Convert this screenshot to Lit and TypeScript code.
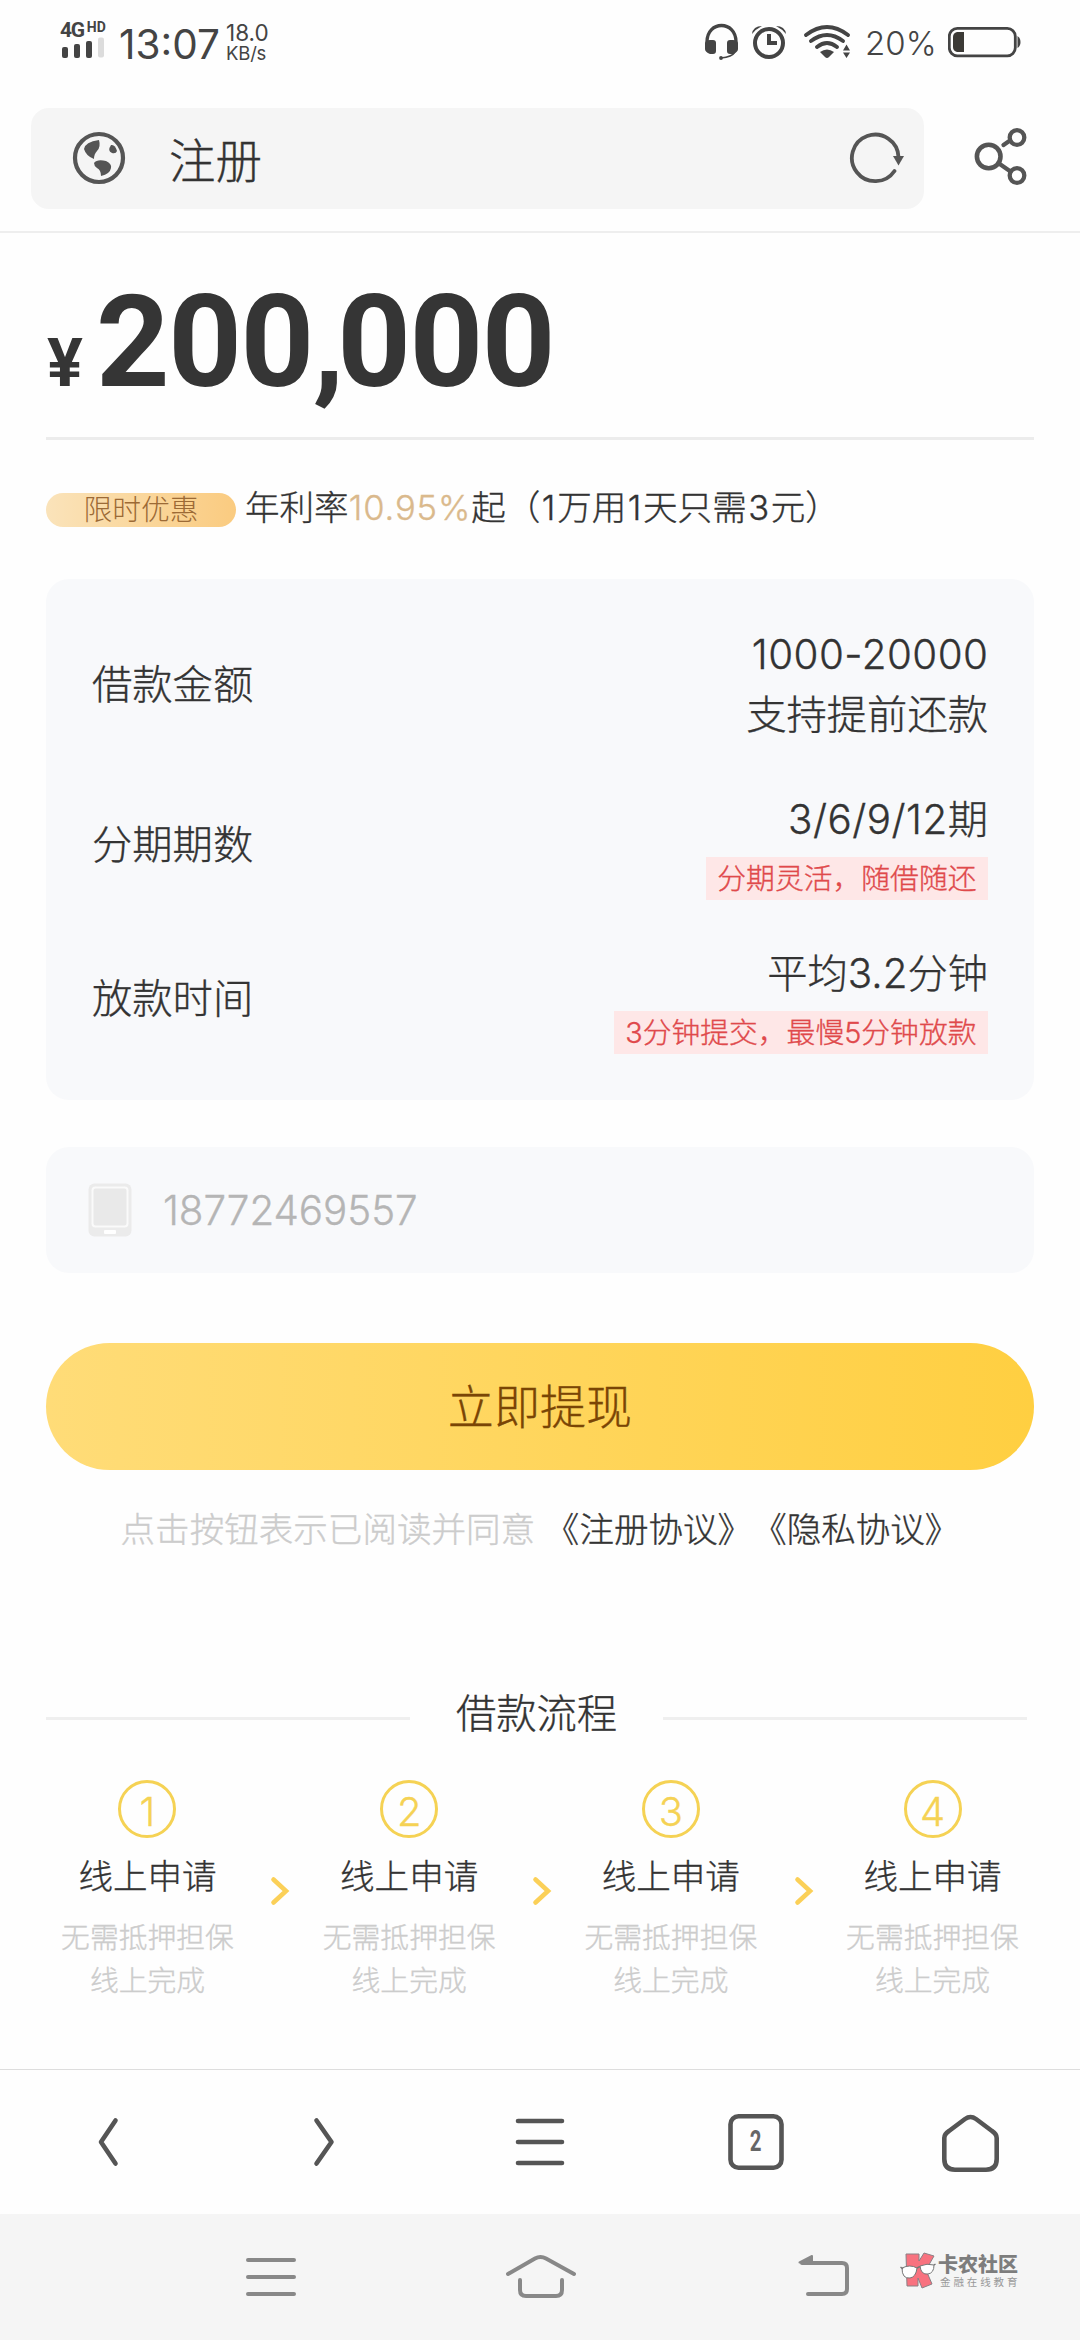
import { LitElement, html, css, svg } from "lit";
import { customElement, property } from "lit/decorators.js";

const fontStack = css`"Inter", "Noto Sans CJK SC", sans-serif`;

@customElement("status-bar")
class StatusBar extends LitElement {
  static styles = css`
    :host { display: flex; justify-content: space-between; height: 108px; padding: 0 59px 0 60px; box-sizing: border-box; color: #444; font-family: ${fontStack}; -webkit-text-stroke: 0; }
    .side { display: flex; }
    .signal { width: 47px; padding-top: 22px; }
    .net { display: flex; align-items: flex-start; gap: 3px; height: 15px; font-family: Roboto, sans-serif; font-weight: 700; }
    .gen { font-size: 21px; line-height: 16px; letter-spacing: -1.3px; }
    .hd { font-size: 14px; line-height: 11px; }
    .bars { display: block; width: 44px; height: 21px; }
    .clock { margin-left: 12px; padding-top: 24px; font-size: 40.500px; line-height: 42px; letter-spacing: 0; width: 103px; white-space: nowrap; font-weight: 400; }
    .speed { padding-top: 21px; margin-left: 4px; font-weight: 400; }
    .rate { font-size: 22.500px; line-height: 23px; }
    .unit { font-size: 18.500px; line-height: 18px; letter-spacing: -0.200px; }
    .icon { display: block; height: 40px; margin-top: 22px; }
    .pct { font-size: 33px; line-height: 42px; padding-top: 22px; margin-left: 13px; width: 83px; letter-spacing: 0; font-weight: 350; }
  `;
  render() {
    return html`
      <div class="side">
        <div class="signal">
          <div class="net"><span class="gen">4G</span><span class="hd">HD</span></div>
          <svg class="bars" viewBox="60 37 44 21">
            <rect x="62" y="47" width="6" height="11" rx="2" fill="#444" />
            <rect x="74" y="44" width="6" height="14" rx="2" fill="#444" />
            <rect x="86" y="41" width="6" height="17" rx="2" fill="#444" />
            <rect x="98" y="37.500" width="6" height="20" rx="2" fill="#dcdcdc" />
          </svg>
        </div>
        <div class="clock">13:07</div>
        <div class="speed"><div class="rate">18.0</div><div class="unit">KB/s</div></div>
      </div>
      <div class="side">
        <svg class="icon" width="148" viewBox="704 22 148 40" fill="none" stroke="#444">
          <path d="M707 45V42C707 20 736 20 736 42V45" stroke-width="3.400" />
          <path d="M705 43Q706 40 710 40H713Q716 40 716 43V51Q716 54 713 54H710Q705 52 705 49Z" fill="#444" stroke="none" />
          <path d="M738 43Q737 40 733 40H730Q727 40 727 43V51Q727 54 730 54H733Q738 52 738 49Z" fill="#444" stroke="none" />
          <path d="M735 52Q732 57 721 58" stroke-width="1.500" />
          <circle cx="721" cy="58" r="1.900" fill="#444" stroke="none" />
          <circle cx="769" cy="43" r="14" stroke-width="4" />
          <path d="M769 34V43H777" stroke-width="4" />
          <path d="M752 34Q753 26 762 26Q756 29 752 34ZM786 34Q785 26 776 26Q782 29 786 34Z" fill="#444" stroke="none" />
          <path d="M806 35Q827 19 848 35M811 41Q827 29 843 41M817 47Q827 39 837 47" stroke-width="3.800" stroke-linecap="round" />
          <path d="M820 52Q827 47 834 52L829 57Q827 59 825 57Z" fill="#444" stroke="none" />
          <path d="M843 50.500L846.500 44.500L850 50.500ZM843 52.500H850L846.500 58Z" fill="#444" stroke="none" />
        </svg>
        <div class="pct">20%</div>
        <svg class="icon" width="73" viewBox="948 22 73 40">
          <rect x="949.300" y="28.300" width="66" height="27.500" rx="8" fill="none" stroke="#444" stroke-width="2.800" />
          <path d="M964 32H957Q953 33 953 37V47Q953 51 957 52H964Z" fill="#3c3a36" />
          <path d="M1017.500 36Q1020.500 38 1020.500 42Q1020.500 46 1017.500 48Z" fill="#444" />
        </svg>
      </div>
    `;
  }
}

@customElement("address-bar")
class AddressBar extends LitElement {
  @property() title = "";
  static styles = css`
    :host { display: flex; height: 125px; box-sizing: border-box; padding-left: 31px; border-bottom: 2px solid #eee; font-family: ${fontStack}; }
    .field { display: flex; align-items: center; width: 893px; height: 101px; border-radius: 18px; background: #f5f5f5; }
    .globe { display: block; margin: 0 0 2px 41px; }
    .name { flex: 1; margin-left: 43px; padding-top: 4px; font-size: 46.500px; line-height: 60px; color: #333; }
    .reload { display: block; margin: 0 19px 2px 0; }
    .share { display: block; margin: 20px 0 0 49px; }
  `;
  render() {
    return html`
      <div class="field">
        <svg class="globe" width="54" height="54" viewBox="72 131 54 54">
          <circle cx="99" cy="158" r="24" fill="none" stroke="#555" stroke-width="4.200" />
          <path d="M84 149Q85 142 99 140Q101 147 97 151Q94 154 94 159Q86 156 84 149Z" fill="#555" />
          <path d="M94 163Q97 159 106 161Q112 164 111 168Q110 174 101 176Q101 170 97 168Q94 166 94 163Z" fill="#555" />
          <path d="M111 145Q115 144 117 151Q116 154 112 153Q107 151 111 145Z" fill="#555" />
        </svg>
        <span class="name">${this.title}</span>
        <svg class="reload" width="56" height="54" viewBox="849 131 56 54">
          <path d="M894.500 171A23.300 23.300 0 1 1 898.500 157" fill="none" stroke="#555" stroke-width="3.800" stroke-linecap="round" />
          <path d="M893 156H904L898.500 165.500Z" fill="#555" />
        </svg>
      </div>
      <svg class="share" width="56" height="58" viewBox="973 128 56 58" fill="none" stroke="#555">
        <circle cx="988.700" cy="156.500" r="11.800" stroke-width="4.600" />
        <circle cx="1017" cy="137.500" r="7.300" stroke-width="4.300" />
        <circle cx="1017" cy="175.500" r="7.300" stroke-width="4.300" />
        <path d="M1003.500 145L1010 140.500M999 163.500L1010.500 171.500" stroke-width="4.300" stroke-linecap="round" />
      </svg>
    `;
  }
}

interface Term { label: string; value: string; extra?: string; tag?: string; }
const terms: Term[] = [
  { label: "借款金额", value: "1000-20000", extra: "支持提前还款" },
  { label: "分期期数", value: "3/6/9/12期", tag: "分期灵活，随借随还" },
  { label: "放款时间", value: "平均3.2分钟", tag: "3分钟提交，最慢5分钟放款" },
];

@customElement("loan-terms")
class LoanTerms extends LitElement {
  static styles = css`
    :host { display: flex; flex-direction: column; gap: 44.500px; padding: 46px; border-radius: 23px; background: #f8f9fb; color: #333; font-size: 40.300px; line-height: 60px; }
    .row { display: flex; justify-content: space-between; align-items: center; }
    .values { display: flex; flex-direction: column; align-items: flex-end; }
    .amount { letter-spacing: 0.500px; margin-right: -0.500px; }
    .tag { margin-top: 7px; padding: 0 11.500px; font-size: 28.800px; line-height: 43px; background: #fee7e7; color: #e0494b; }
  `;
  render() {
    return html`${terms.map((t) => html`
      <div class="row">
        <span>${t.label}</span>
        <div class="values">
          <span class=${/^\d/.test(t.value) ? "amount" : "plain"}>${t.value}</span>
          ${t.extra ? html`<span>${t.extra}</span>` : ""}
          ${t.tag ? html`<span class="tag">${t.tag}</span>` : ""}
        </div>
      </div>`)}`;
  }
}

@customElement("loan-steps")
class LoanSteps extends LitElement {
  static styles = css`
    :host { display: flex; color: #333; }
    .step { display: flex; flex-direction: column; align-items: center; width: 203px; }
    .num { box-sizing: border-box; width: 58px; height: 58px; border: 3px solid #f5d254; border-radius: 50%; text-align: center; font-size: 40px; line-height: 57px; color: #f5d254; }
    .name { margin-top: 13px; font-size: 34.560px; line-height: 52px; }
    .desc { margin-top: 13px; font-size: 28.800px; line-height: 43.200px; color: #ccc; text-align: center; white-space: nowrap; }
    .arrow { display: flex; justify-content: center; box-sizing: border-box; width: 58.700px; padding: 96px 0 0 4px; }
  `;
  render() {
    return html`${[1, 2, 3, 4].map((n) => html`
      ${n > 1 ? html`<div class="arrow"><svg width="20" height="30" viewBox="0 0 20 30"><path d="M3.500 3.500L16 15L3.500 26.500" fill="none" stroke="#fbd058" stroke-width="4.600" stroke-linecap="round" /></svg></div>` : ""}
      <div class="step">
        <div class="num">${n}</div>
        <div class="name">线上申请</div>
        <div class="desc">无需抵押担保<br />线上完成</div>
      </div>`)}`;
  }
}

const toolIcons = [
  svg`<path d="M115.500 2120.500L101 2142L115.500 2163.500" />`,
  svg`<path d="M316.500 2120.500L331.500 2142L316.500 2163.500" />`,
  svg`<path d="M518 2121H562M518 2142H562M518 2163H562" />`,
  svg`<rect x="730.500" y="2116.300" width="51" height="51.500" rx="8" />`,
  svg`<path d="M965 2119Q970.500 2115 976 2119L992 2131Q996.700 2134 996.700 2138V2159Q996.700 2169.700 986 2169.700H955Q944.300 2169.700 944.300 2159V2138Q944.300 2134 949 2131Z" />`,
];

@customElement("browser-toolbar")
class BrowserToolbar extends LitElement {
  static styles = css`
    :host { display: grid; grid-template-columns: repeat(5, 216px); height: 145px; box-sizing: border-box; border-top: 1px solid #ddd; -webkit-text-stroke: 0; }
    .cell { display: grid; place-items: center; }
    .cell > * { grid-area: 1 / 1; }
    .icon { display: block; }
    .count { font-family: Roboto, sans-serif; font-weight: 700; font-size: 30px; line-height: 40px; color: #666; transform: scaleX(0.68); padding-bottom: 2px; }
  `;
  render() {
    return html`${toolIcons.map((icon, i) => html`
      <div class="cell">
        <svg class="icon" width="216" height="144" viewBox="${i * 216} 2070 216 144" fill="none" stroke="#555" stroke-width="4.600" stroke-linecap="round" stroke-linejoin="round">${icon}</svg>
        ${i === 3 ? html`<span class="count">2</span>` : ""}
      </div>`)}`;
  }
}

@customElement("system-nav")
class SystemNav extends LitElement {
  static styles = css`
    :host { display: flex; height: 126px; background: #f5f5f5; -webkit-text-stroke: 0; }
    .keys { display: block; }
    .brand { display: flex; align-items: flex-start; gap: 2px; padding: 38px 0 0 1px; }
    .words { display: flex; flex-direction: column; }
    .big { font-size: 20px; line-height: 24px; font-weight: 900; color: #7d7d7d; font-family: "Noto Sans CJK SC", sans-serif; white-space: nowrap; }
    .small { padding-left: 2px; font-size: 10.500px; line-height: 12px; letter-spacing: 2.900px; font-weight: 400; color: #999; font-family: "Noto Sans CJK SC", sans-serif; white-space: nowrap; }
  `;
  render() {
    return html`
      <svg class="keys" width="899" height="126" viewBox="0 2214 899 126" fill="none" stroke="#888" stroke-width="4" stroke-linecap="round" stroke-linejoin="round">
        <path d="M248 2260H294M248 2277H294M248 2294H294" />
        <path d="M508 2274L535 2258.500Q540.500 2255.500 546 2258.500L574 2274" />
        <path d="M520 2280V2290Q520 2296 526 2296H556Q562 2296 562 2290V2280" />
        <path d="M802 2263H842Q847 2263 847 2268V2289Q847 2294 842 2294H808" />
        <path d="M799.500 2262.500L812 2256V2263Z" fill="#888" stroke-width="2" />
      </svg>
      <div class="brand">
        <svg width="36" height="38" viewBox="899 2252 36 38">
          <path d="M905 2254H918V2261L923 2253L933 2256L925 2270L931 2284L921 2288L917 2278V2286H906Z" fill="#f8727f" stroke="#8a8085" />
          <path d="M901 2268Q901 2279 909 2278Q915 2277 916 2268Q909 2264 901 2268ZM919 2266Q920 2275 927 2274Q933 2273 933 2265Q926 2263 919 2266Z" fill="#fff" stroke="#777" />
          <path d="M899.500 2267L902 2269M916 2268L919 2266.500M933 2265L934.500 2264" stroke="#777" stroke-width="1.500" />
        </svg>
        <div class="words"><span class="big">卡农社区</span><span class="small">金融在线教育</span></div>
      </div>
    `;
  }
}

@customElement("app-root")
class AppRoot extends LitElement {
  static styles = css`
    :host { display: flex; flex-direction: column; width: 1080px; height: 2340px; overflow: hidden; background: #fefefe; color: #333; font-family: ${fontStack}; font-weight: 300; -webkit-text-stroke: 0.350px currentcolor; text-spacing-trim: space-all; font-feature-settings: "chws" 0, "halt" 0; }
    .page { flex: 1; display: flex; flex-direction: column; padding: 0 46px; }
    .amount { display: flex; align-items: baseline; height: 207px; box-sizing: border-box; border-bottom: 3px solid #ececec; font-family: Roboto, sans-serif; font-weight: 700; color: #353535; white-space: nowrap; -webkit-text-stroke: 0; }
    .yen { box-sizing: border-box; width: 50px; padding-left: 1px; font-size: 67px; }
    .sum { font-size: 128.500px; line-height: 218px; letter-spacing: -1.500px; }
    .comma { letter-spacing: -7px; }
    .promo { display: flex; align-items: center; margin-top: 42px; height: 52px; font-size: 34.560px; line-height: 52px; white-space: nowrap; }
    .pill { width: 190px; height: 34px; margin: 4px 9px 0 0; border-radius: 17px; text-align: center; font-size: 28.800px; line-height: 33px; color: #9c6a35; background: linear-gradient(90deg, #fae3ba, #facb80); -webkit-text-stroke: 0; }
    .rate { color: #dab98c; letter-spacing: 0.900px; }
    .digit { margin-left: 1.500px; letter-spacing: 1.700px; }
    .terms { margin-top: 45px; }
    .phone { display: flex; align-items: center; gap: 31px; margin-top: 47px; height: 126px; padding-left: 42px; border-radius: 23px; background: #f8f9fb; color: #b5b5b5; font-size: 40.300px; }
    .submit { margin: 70px 0 0; height: 127px; border: 0; border-radius: 64px; font: inherit; font-size: 46.080px; line-height: 124px; padding: 0; color: #7a4505; background: linear-gradient(90deg, #ffdc78, #ffcf41); }
    .agree { margin-top: 34px; font-size: 34.560px; line-height: 52px; text-align: center; color: #ccc; white-space: nowrap; }
    .link { color: #333; }
    .heading { display: flex; align-items: center; justify-content: space-between; width: 981px; margin-top: 128px; font-size: 40.300px; line-height: 60px; }
    .line { width: 364px; height: 3px; margin-top: 8px; background: #efefef; }
    .steps { margin-top: 36px; }
  `;
  render() {
    return html`
      <status-bar></status-bar>
      <address-bar title="注册"></address-bar>
      <main class="page">
        <div class="amount"><span class="yen">¥</span><span class="sum">200<span class="comma">,</span>000</span></div>
        <div class="promo"><span class="pill">限时优惠</span><span>年利率<span class="rate">10.95%</span>起（<span class="digit">1</span>万用<span class="digit">1</span>天只需<span class="digit">3</span>元）</span></div>
        <loan-terms class="terms"></loan-terms>
        <div class="phone">
          <svg width="44" height="54" viewBox="0 0 44 54">
            <rect x="0.500" y="0.500" width="43" height="53" rx="6" fill="#ebebeb" />
            <rect x="4.500" y="4.500" width="35" height="39" rx="3" fill="#e9e9e9" stroke="#fafafa" stroke-width="2" />
            <rect x="16" y="47" width="12" height="4" rx="1" fill="#fff" />
          </svg>
          <span>18772469557</span>
        </div>
        <button class="submit">立即提现</button>
        <div class="agree">点击按钮表示已阅读并同意 <span class="link">《注册协议》《隐私协议》</span></div>
        <div class="heading"><span class="line"></span><span>借款流程</span><span class="line"></span></div>
        <loan-steps class="steps"></loan-steps>
      </main>
      <browser-toolbar></browser-toolbar>
      <system-nav></system-nav>
    `;
  }
}
